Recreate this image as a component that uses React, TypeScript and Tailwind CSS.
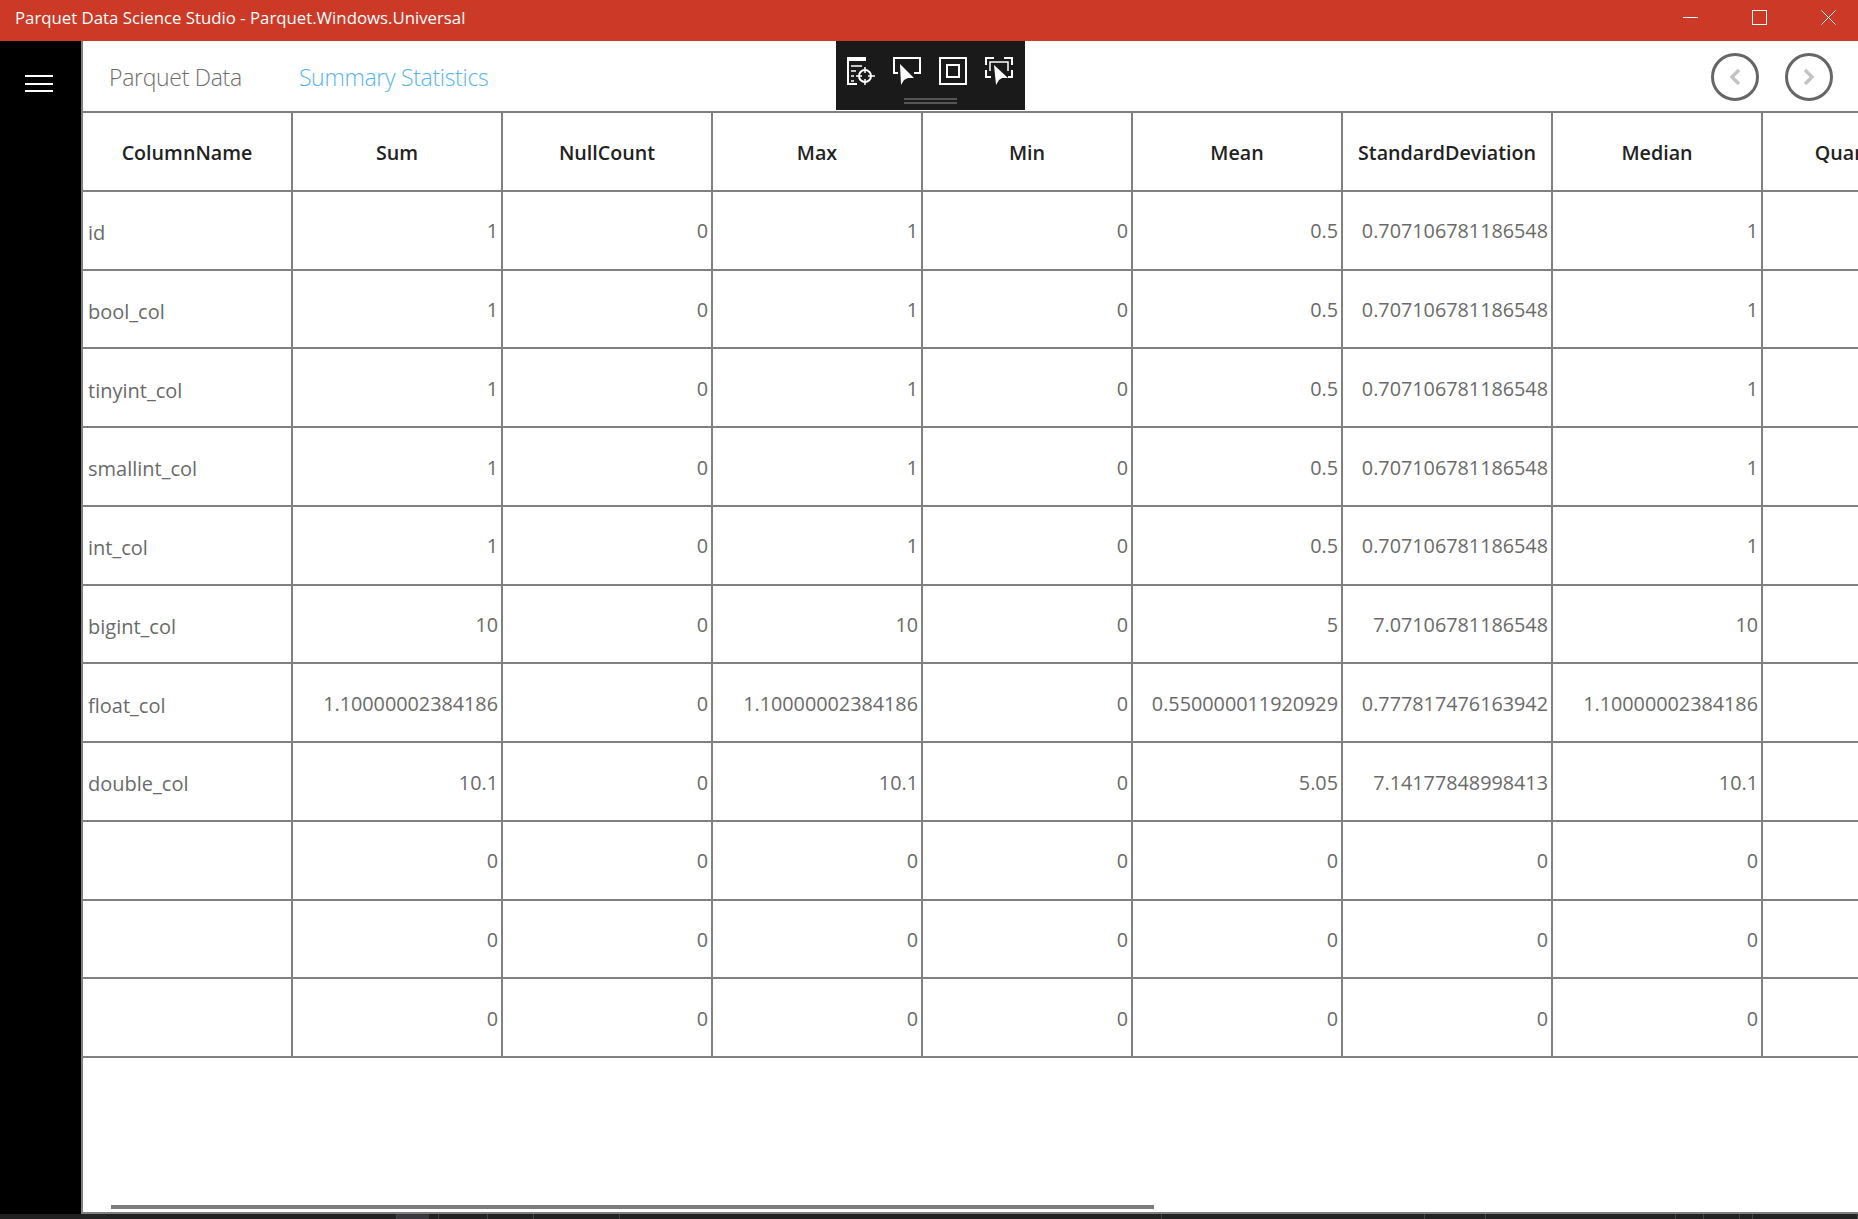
import React from 'react';

const headers = ['ColumnName', 'Sum', 'NullCount', 'Max', 'Min', 'Mean', 'StandardDeviation', 'Median', 'Quantile25'];

const rows: string[][] = [
  ['id', '1', '0', '1', '0', '0.5', '0.707106781186548', '1', ''],
  ['bool_col', '1', '0', '1', '0', '0.5', '0.707106781186548', '1', ''],
  ['tinyint_col', '1', '0', '1', '0', '0.5', '0.707106781186548', '1', ''],
  ['smallint_col', '1', '0', '1', '0', '0.5', '0.707106781186548', '1', ''],
  ['int_col', '1', '0', '1', '0', '0.5', '0.707106781186548', '1', ''],
  ['bigint_col', '10', '0', '10', '0', '5', '7.07106781186548', '10', ''],
  ['float_col', '1.10000002384186', '0', '1.10000002384186', '0', '0.550000011920929', '0.777817476163942', '1.10000002384186', ''],
  ['double_col', '10.1', '0', '10.1', '0', '5.05', '7.14177848998413', '10.1', ''],
  ['', '0', '0', '0', '0', '0', '0', '0', ''],
  ['', '0', '0', '0', '0', '0', '0', '0', ''],
  ['', '0', '0', '0', '0', '0', '0', '0', ''],
];

// widths of the taskbar slivers showing under the window
const taskbar = [397, 32, 10, 49, 46, 86, 542, 263, 61, 190, 28, 36, 13, 105];

function PickerIcon() {
  return (
    <svg width="28" height="28" viewBox="0 0 28 28" fill="none" stroke="white" strokeWidth="2">
      <path d="M1 1h17v2H1z" fill="white" />
      <path d="M1 3v24h9" />
      <path d="M4 9h11M4 14h5M4 19h3M4 24h3" strokeWidth="1.5" />
      <circle cx="18" cy="19" r="6" />
      <path d="M18 10v6M18 22v6M9 19h6M21 19h7" strokeWidth="1.5" />
    </svg>
  );
}

function CursorIcon() {
  return (
    <svg width="28" height="28" viewBox="0 0 28 28" fill="none" stroke="white" strokeWidth="2">
      <path d="M5 16H1V1h26v15h-6" />
      <path d="M7 7l14 14h-6l-4 2-3 5z" fill="white" stroke="none" />
    </svg>
  );
}

function SquareIcon() {
  return (
    <svg width="28" height="28" viewBox="0 0 28 28" fill="none" stroke="white">
      <rect x="1" y="1" width="26" height="26" strokeWidth="2" />
      <rect x="8" y="8" width="12" height="12" strokeWidth="2" />
    </svg>
  );
}

function FrameCursorIcon() {
  return (
    <svg width="28" height="28" viewBox="0 0 28 28" fill="none" stroke="white" strokeWidth="2">
      <path d="M1 8V1h8M19 1h8v7M1 13v7h5M27 13v7h-4" />
      <path d="M5 14V5h18v9" strokeWidth="1.5" />
      <path d="M9 8l14 13h-6l-3 2-3 5z" fill="white" stroke="none" />
    </svg>
  );
}

export default function App() {
  return (
    <div className="flex flex-col h-screen overflow-hidden bg-white font-['Open_Sans',sans-serif]">
      {/* Title bar */}
      <div className="flex items-center justify-between h-[41px] shrink-0 bg-[#cc3a27] text-white">
        <span className="pl-[15px] text-[16.8px] leading-none pb-[5px]">Parquet Data Science Studio - Parquet.Windows.Universal</span>
        <div className="flex items-center gap-[54px] pr-[22px] pb-[7px]">
          <div className="w-[15px] h-px bg-white" />
          <div className="w-[15px] h-[15px] border border-white" />
          <svg width="15" height="15" viewBox="0 0 16 16" stroke="white" strokeWidth="1"><path d="M.5.5l15 15M15.500.5l-15 15" /></svg>
        </div>
      </div>

      <div className="flex flex-1 min-h-0">
        {/* Sidebar */}
        <aside className="w-[81px] shrink-0 bg-black pt-[34px] pl-[25px]">
          <div className="flex flex-col gap-[5.500px] w-[28px]">
            <div className="h-[2px] bg-white" />
            <div className="h-[2px] bg-white" />
            <div className="h-[2px] bg-white" />
          </div>
        </aside>

        {/* Main */}
        <main className="relative flex flex-col flex-1 min-w-0 overflow-hidden border-l-2 border-b-2 border-[#808080]">
          <div className="flex items-center h-[70px] shrink-0 pl-[26px] pr-[25px] pt-[2px] font-light text-[23px] tracking-[-0.3px]">
            <span className="text-[#6e6e6e] mr-[57px]">Parquet Data</span>
            <span className="text-[#57b4ee]">Summary Statistics</span>
            <div className="ml-auto flex gap-[26px]">
              <button className="flex items-center justify-center w-[48px] h-[48px] rounded-full border-[3px] border-[#666666]">
                <svg width="14" height="18" viewBox="0 0 14 18" fill="none" stroke="#c4c4c4" strokeWidth="3.500"><path d="M11 2L4 9l7 7" /></svg>
              </button>
              <button className="flex items-center justify-center w-[48px] h-[48px] rounded-full border-[3px] border-[#666666]">
                <svg width="14" height="18" viewBox="0 0 14 18" fill="none" stroke="#c4c4c4" strokeWidth="3.500"><path d="M3 2l7 7-7 7" /></svg>
              </button>
            </div>
          </div>

          {/* Table */}
          <div className="grid grid-cols-[repeat(9,210px)] auto-rows-[78.75px] w-max border-t-2 border-[#808080] text-[19.8px] text-[#6a6a6a]">
            {headers.map((h) => (
              <div key={h} className="flex items-center justify-center pt-[2px] border-r-2 border-b-2 border-[#808080] font-semibold text-[#222222] text-[19.7px] whitespace-nowrap">
                {h}
              </div>
            ))}
            {rows.map((row, i) =>
              row.map((cell, j) => (
                <div
                  key={i + '-' + j}
                  className={
                    j === 0
                      ? 'flex items-center pl-[5px] pt-[6px] text-[20px] border-r-2 border-b-2 border-[#808080] whitespace-nowrap'
                      : 'flex items-center justify-end pr-[3px] pt-[2px] border-r-2 border-b-2 border-[#808080] whitespace-nowrap'
                  }
                >
                  {cell}
                </div>
              ))
            )}
          </div>

          {/* Horizontal scrollbar */}
          <div className="absolute left-[28px] bottom-[3px] w-[1043px] h-[4px] bg-[#7d7d7d]" />

          {/* Floating debug toolbar */}
          <div className="absolute left-[753px] top-0 flex flex-col items-center w-[189px] h-[69px] bg-[#1a1a1a]">
            <div className="flex gap-[18px] pt-[16px] pr-[2px]">
              <PickerIcon />
              <CursorIcon />
              <SquareIcon />
              <FrameCursorIcon />
            </div>
            <div className="flex flex-col gap-[2px] w-[53px] mt-[13px]">
              <div className="h-[2px] bg-[#555555]" />
              <div className="h-[2px] bg-[#555555]" />
            </div>
          </div>
        </main>
      </div>

      {/* Sliver of the desktop taskbar below the window */}
      <div className="flex h-[5px] shrink-0 bg-[#222222]">
        {taskbar.map((w, i) => (
          <div key={i} className={i === 1 ? 'bg-[#3a3a3e]' : 'border-r border-[#444444]'} style={{ width: w }} />
        ))}
      </div>
    </div>
  );
}
